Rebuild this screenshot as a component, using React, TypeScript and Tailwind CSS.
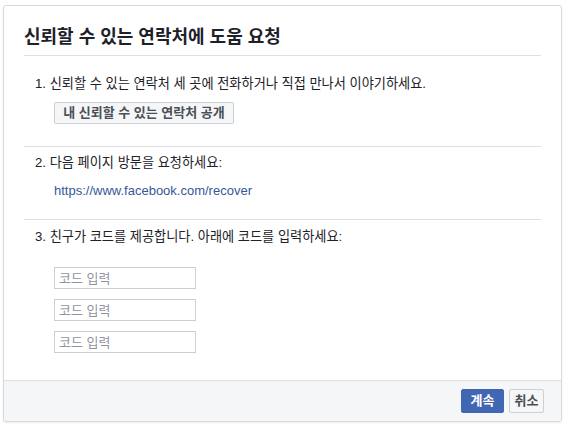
import React from 'react';

const font = { fontFamily: '"Liberation Sans", "Noto Sans CJK KR", sans-serif' };

export default function App() {
  return (
    <div className="w-[565px] h-[426px] bg-white pt-[5px] pl-[3px]" style={font}>
      <div className="w-[559px] h-[417px] flex flex-col border border-[#d6d9dd] rounded-[3px] bg-white shadow-[0_1px_2px_rgba(0,0,0,0.08)] overflow-hidden">
        {/* header */}
        <div className="mx-[20px] pt-[20px] pb-[7px] border-b border-[#dddfe2]">
          <h2 className="text-[18px] leading-[22px] font-bold text-[#1d2129]">신뢰할 수 있는 연락처에 도움 요청</h2>
        </div>

        {/* step 1 */}
        <div className="mx-[20px] pt-[20px] pb-[22px] border-b border-[#dddfe2]">
          <p className="pl-[11px] text-[13.2px] leading-[16px] text-[#1d2129]">
            1. 신뢰할 수 있는 연락처 세 곳에 전화하거나 직접 만나서 이야기하세요.
          </p>
          <button className="ml-[30px] mt-[10px] h-[22px] w-[180px] flex items-center justify-center bg-[#f5f6f7] border border-[#ccd0d5] rounded-[2px] text-[13px] font-bold text-[#4b4f56]">
            내 신뢰할 수 있는 연락처 공개
          </button>
        </div>

        {/* step 2 */}
        <div className="mx-[20px] pt-[8px] pb-[20px] border-b border-[#dddfe2]">
          <p className="pl-[11px] text-[13.2px] leading-[16px] text-[#1d2129]">2. 다음 페이지 방문을 요청하세요:</p>
          <a className="block ml-[30px] mt-[12px] text-[13px] leading-[16px] text-[#365899]">https://www.facebook.com/recover</a>
        </div>

        {/* step 3 */}
        <div className="mx-[20px] pt-[9px] flex-1">
          <p className="pl-[11px] text-[13.2px] leading-[16px] text-[#1d2129]">3. 친구가 코드를 제공합니다. 아래에 코드를 입력하세요:</p>
          <div className="ml-[30px] mt-[22px] flex flex-col gap-[10px]">
            {[0, 1, 2].map((i) => (
              <input
                key={i}
                placeholder="코드 입력"
                className="w-[142px] h-[22px] px-[4px] border border-[#ccd0d5] text-[13px] text-[#1d2129] placeholder:text-[#90949c] outline-none"
                style={font}
              />
            ))}
          </div>
        </div>

        {/* footer */}
        <div className="h-[41px] bg-[#f5f6f7] border-t border-[#dddfe2] flex items-start justify-end gap-[5px] pt-[8px] pr-[17px]">
          <button className="h-[24px] w-[43px] flex items-center justify-center bg-[#4267b2] border border-[#4267b2] rounded-[2px] text-[13px] font-bold text-white">
            계속
          </button>
          <button className="h-[24px] w-[35px] flex items-center justify-center bg-[#f5f6f7] border border-[#ccd0d5] rounded-[2px] text-[13px] font-bold text-[#4b4f56]">
            취소
          </button>
        </div>
      </div>
    </div>
  );
}
